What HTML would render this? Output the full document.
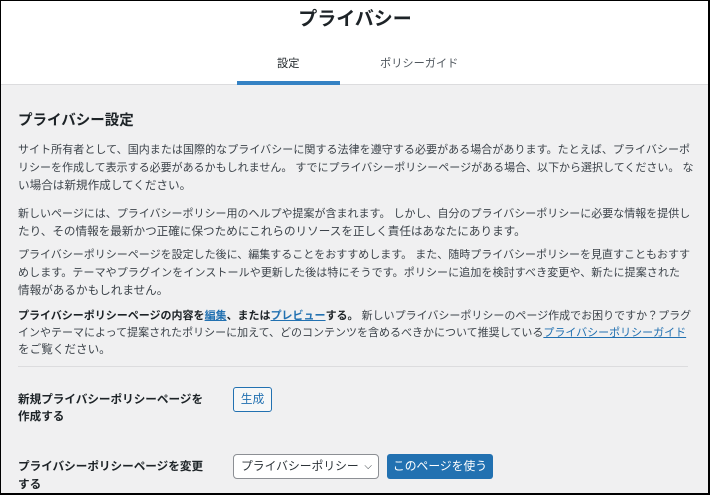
<!DOCTYPE html>
<html><head><meta charset="utf-8"><style>
*{margin:0;padding:0;box-sizing:border-box}
body{width:710px;height:495px;overflow:hidden;background:#f0f0f1;font-family:"Liberation Sans","Noto Sans CJK JP",sans-serif;color:#3c434a;position:relative}
.frame{position:absolute;inset:0;border:1px solid #000;border-right:2px solid #000;border-bottom:2px solid #000;pointer-events:none;z-index:9}
.hdr{position:absolute;left:0;top:0;width:710px;height:85px;background:#fff;border-bottom:1px solid #dcdcde}
.t{position:absolute;white-space:nowrap;font-size:11.6px;line-height:18px}
.j{width:672px;text-align:justify;text-align-last:justify;font-size:11px}
.b{font-weight:bold;color:#1d2327}
a{color:#2271b1;text-decoration:underline}
.btn{position:absolute;font-size:11.8px;border-radius:3px;text-align:center}
</style></head><body>
<div class="hdr">
<div class="t b" style="left:0;width:710px;text-align:center;top:7px;font-size:19px;line-height:26px">プライバシー</div>
<div class="t" style="left:277px;top:55px;font-size:11.2px;color:#1d2327">設定</div>
<div class="t" style="left:380px;top:55px;font-size:11.2px;color:#50575e">ポリシーガイド</div>
<div style="position:absolute;left:237px;top:81px;width:103px;height:4px;background:#3582c4"></div>
</div>
<div class="t b" style="left:18px;top:110px;font-size:14.5px;line-height:22px">プライバシー設定</div>
<div class="t j" style="left:18px;top:141px">サイト所有者として、国内または国際的なプライバシーに関する法律を遵守する必要がある場合があります。たとえば、プライバシーポ</div>
<div class="t j" style="left:18px;top:159px">リシーを作成して表示する必要があるかもしれません。 すでにプライバシーポリシーページがある場合、以下から選択してください。 な</div>
<div class="t" style="left:18px;top:177px">い場合は新規作成してください。</div>
<div class="t j" style="left:18px;top:205px">新しいページには、プライバシーポリシー用のヘルプや提案が含まれます。 しかし、自分のプライバシーポリシーに必要な情報を提供し</div>
<div class="t" style="left:18px;top:223px">たり、その情報を最新かつ正確に保つためにこれらのリソースを正しく責任はあなたにあります。</div>
<div class="t j" style="left:18px;top:246px">プライバシーポリシーページを設定した後に、編集することをおすすめします。 また、随時プライバシーポリシーを見直すこともおすす</div>
<div class="t j" style="left:18px;top:264px;width:662px">めします。テーマやプラグインをインストールや更新した後は特にそうです。ポリシーに追加を検討すべき変更や、新たに提案された</div>
<div class="t" style="left:18px;top:282px">情報があるかもしれません。</div>
<div class="t j" style="left:18px;top:307px"><span class="b">プライバシーポリシーページの内容を<a href="#">編集</a>、または<a href="#">プレビュー</a>する。</span> 新しいプライバシーポリシーのページ作成でお困りですか？プラグ</div>
<div class="t j" style="left:18px;top:324px;width:662px">インやテーマによって提案されたポリシーに加えて、どのコンテンツを含めるべきかについて推奨している<a href="#">プライバシーポリシーガイド</a></div>
<div class="t" style="left:18px;top:341px">をご覧ください。</div>
<div style="position:absolute;left:18px;top:366px;width:670px;height:1px;background:#dcdcde"></div>
<div class="t b" style="left:18px;top:391px">新規プライバシーポリシーページを</div>
<div class="t b" style="left:18px;top:408px">作成する</div>
<div class="btn" style="left:233px;top:387px;width:39px;height:25px;border:1px solid #2271b1;color:#2271b1;background:#f6f7f7;line-height:23px">生成</div>
<div class="t b" style="left:18px;top:458px">プライバシーポリシーページを変更</div>
<div class="t b" style="left:18px;top:476px">する</div>
<div class="btn" style="left:233px;top:454px;width:146px;height:25px;border:1px solid #8c8f94;background:#fff;color:#2c3338;text-align:left;padding-left:7px;line-height:23px;border-radius:4px">プライバシーポリシー<span style="position:absolute;right:6px;top:0;font-size:10px">⌵</span></div>
<div class="btn" style="left:387px;top:454px;width:106px;height:25px;background:#2271b1;color:#fff;line-height:25px">このページを使う</div>
<div class="frame"></div>
</body></html>
